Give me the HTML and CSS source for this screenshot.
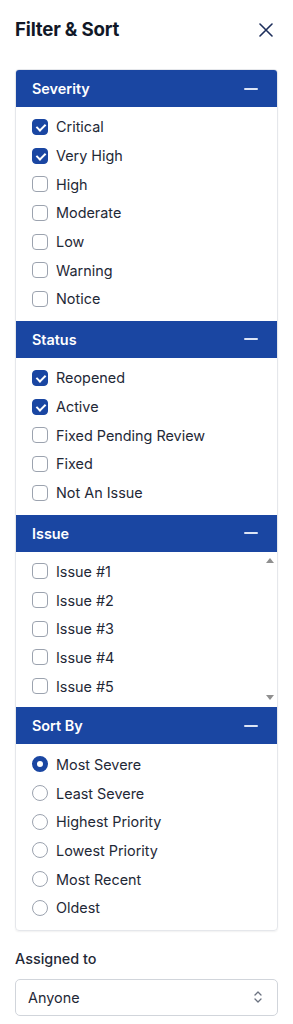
FILE: index.html
```html
<!DOCTYPE html>
<html>
<head>
<meta charset="utf-8">
<link rel="stylesheet" href="styles.css">
</head>
<body>
<div class="page">
  <div class="top">
    <h1 class="title">Filter &amp; Sort</h1>
    <svg class="close" width="14" height="14" viewBox="0 0 14 14"><path d="M1 1L13 13M13 1L1 13" stroke="#1e2f5c" stroke-width="1.6" stroke-linecap="round"/></svg>
  </div>

  <div class="panel">
    <div class="sec-head"><span>Severity</span><span class="minus"></span></div>
    <div class="sec-body">
      <label class="row"><span class="cb on"></span>Critical</label>
      <label class="row"><span class="cb on"></span>Very High</label>
      <label class="row"><span class="cb"></span>High</label>
      <label class="row"><span class="cb"></span>Moderate</label>
      <label class="row"><span class="cb"></span>Low</label>
      <label class="row"><span class="cb"></span>Warning</label>
      <label class="row"><span class="cb"></span>Notice</label>
    </div>

    <div class="sec-head"><span>Status</span><span class="minus"></span></div>
    <div class="sec-body">
      <label class="row"><span class="cb on"></span>Reopened</label>
      <label class="row"><span class="cb on"></span>Active</label>
      <label class="row"><span class="cb"></span>Fixed Pending Review</label>
      <label class="row"><span class="cb"></span>Fixed</label>
      <label class="row"><span class="cb"></span>Not An Issue</label>
    </div>

    <div class="sec-head"><span>Issue</span><span class="minus"></span></div>
    <div class="sec-body scroll">
      <label class="row"><span class="cb"></span>Issue #1</label>
      <label class="row"><span class="cb"></span>Issue #2</label>
      <label class="row"><span class="cb"></span>Issue #3</label>
      <label class="row"><span class="cb"></span>Issue #4</label>
      <label class="row"><span class="cb"></span>Issue #5</label>
      <span class="arrow up"></span>
      <span class="arrow down"></span>
    </div>

    <div class="sec-head"><span>Sort By</span><span class="minus"></span></div>
    <div class="sec-body">
      <label class="row"><span class="rb on"></span>Most Severe</label>
      <label class="row"><span class="rb"></span>Least Severe</label>
      <label class="row"><span class="rb"></span>Highest Priority</label>
      <label class="row"><span class="rb"></span>Lowest Priority</label>
      <label class="row"><span class="rb"></span>Most Recent</label>
      <label class="row"><span class="rb"></span>Oldest</label>
    </div>
  </div>

  <div class="assigned">Assigned to</div>
  <div class="select">
    <span>Anyone</span>
    <svg class="chev" width="8" height="14" viewBox="0 0 8 14"><path d="M1 5L4 2L7 5M1 9L4 12L7 9" fill="none" stroke="#6b7280" stroke-width="1.3" stroke-linecap="round" stroke-linejoin="round"/></svg>
  </div>
</div>
</body>
</html>
```

FILE: styles.css
```css
* { box-sizing: border-box; }
html, body { margin: 0; padding: 0; background: #ffffff; }
body {
  font-family: Inter, "Noto Sans", sans-serif;
  color: #1f2937;
}
.page { padding: 18px 15px 0 15px; }

.top {
  display: flex;
  justify-content: space-between;
  align-items: center;
  height: 24px;
  padding-right: 5px;
}
.title {
  margin: 0;
  font-size: 18.7px;
  line-height: 24px;
  font-weight: 700;
  color: #111827;
  letter-spacing: -0.2px;
}
.close { display: block; }

.panel {
  margin-top: 27px;
  border: 1px solid #e5e7eb;
  border-radius: 4px;
  overflow: hidden;
  box-shadow: 0 1px 2px rgba(0,0,0,0.06);
}
.sec-head {
  height: 37px;
  background: #1a46a2;
  color: #ffffff;
  display: flex;
  align-items: center;
  justify-content: space-between;
  padding: 0 19px 0 16px;
  font-size: 14.4px;
  font-weight: 600;
}
.minus {
  width: 14px;
  height: 2px;
  border-radius: 1px;
  background: #dde5f5;
}
.sec-body {
  padding: 5.67px 16px 7.67px 16px;
  display: flex;
  flex-direction: column;
}
.sec-body.scroll { position: relative; padding-bottom: 7px; }
.row {
  height: 28.67px;
  display: flex;
  align-items: center;
  gap: 8px;
  font-size: 14.4px;
  color: #1f2937;
}
.cb {
  width: 16px;
  height: 16px;
  border: 1px solid #9ca3af;
  border-radius: 4px;
  background: #ffffff;
  flex: none;
  position: relative;
}
.cb.on {
  background: #1a46a2;
  border-color: #1a46a2;
}
.cb.on::after {
  content: "";
  position: absolute;
  left: 4.5px;
  top: 2.5px;
  width: 4px;
  height: 7px;
  border-right: 2px solid #ffffff;
  border-bottom: 2px solid #ffffff;
  transform: rotate(45deg);
}
.rb {
  width: 16px;
  height: 16px;
  border: 1px solid #9ca3af;
  border-radius: 50%;
  background: #ffffff;
  flex: none;
}
.rb.on { border: 5px solid #1a46a2; }

.arrow {
  position: absolute;
  right: 3px;
  width: 0;
  height: 0;
  border-left: 4px solid transparent;
  border-right: 4px solid transparent;
}
.arrow.up { top: 6px; border-bottom: 5px solid #8f8f8f; }
.arrow.down { bottom: 7px; border-top: 5px solid #8f8f8f; }

.assigned {
  margin-top: 18px;
  font-size: 14.4px;
  line-height: 20px;
  font-weight: 500;
  color: #1f2937;
}
.select {
  margin-top: 10px;
  height: 37px;
  border: 1px solid #d1d5db;
  border-radius: 5px;
  display: flex;
  align-items: center;
  justify-content: space-between;
  padding: 0 15px 0 12px;
  font-size: 14.4px;
  color: #1f2937;
}
.chev { display: block; }
```
